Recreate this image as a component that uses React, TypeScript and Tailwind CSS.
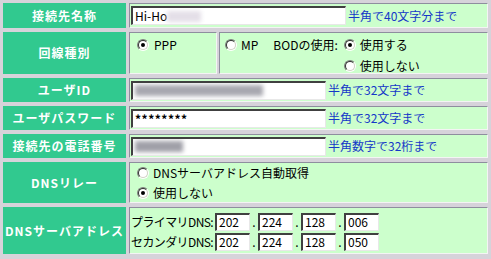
const font = "font-['Noto_Sans_CJK_JP','Noto_Sans',sans-serif]";

function Radio({ checked }: { checked?: boolean }) {
  return (
    <span className="inline-flex h-[12px] w-[12px] shrink-0 rounded-full border border-t-[#808080] border-l-[#808080] border-b-white border-r-white">
      <span className="flex h-full w-full items-center justify-center rounded-full border border-t-[#303030] border-l-[#303030] border-b-[#d4d0c8] border-r-[#d4d0c8] bg-white">
        {checked && <span className="h-[4px] w-[4px] rounded-full bg-black" />}
      </span>
    </span>
  );
}

function Field({ w, h = 'h-[19px]', children }: { w: string; h?: string; children?: React.ReactNode }) {
  return (
    <div
      className={`${w} ${h} flex shrink-0 items-center overflow-hidden border-t-2 border-l-2 border-b border-r border-t-[#404040] border-l-[#404040] border-b-[#e8e8e8] border-r-[#e8e8e8] bg-white pl-[2px] text-[12px] leading-none text-black`}
    >
      {children}
    </div>
  );
}

function Label({ text }: { text: string }) {
  return (
    <div className="flex items-center justify-center bg-[#31c98f] text-[12px] font-bold tracking-[1px] text-white">
      {text}
    </div>
  );
}

function Value({ children, className = '' }: { children: React.ReactNode; className?: string }) {
  return (
    <div
      className={`flex border border-t-[#8e8e9e] border-l-[#8e8e9e] border-b-[#f4f4f4] border-r-[#f4f4f4] bg-[#ccffcc] text-[12px] text-black ${className}`}
    >
      {children}
    </div>
  );
}

function Hint({ text }: { text: string }) {
  return <span className="ml-[2px] whitespace-nowrap text-[12px] text-[#1437c8]">{text}</span>;
}

function Blur({ w, c }: { w: string; c: string }) {
  return <span className={`inline-block h-[11px] ${w} ${c} blur-[2px]`} />;
}

// one line of four ip octets
function IpRow({ label, parts }: { label: string; parts: string[] }) {
  return (
    <div className="flex h-[18px] items-center">
      <span className="w-[84px] whitespace-nowrap tracking-[-0.6px] leading-[14px]">{label}</span>
      {parts.map((p, i) => (
        <div key={i} className="flex items-center">
          <Field w="w-[35px]" h="h-[18px]">
            {p}
          </Field>
          {i < parts.length - 1 && <span className="w-[8px] text-center leading-[14px]">.</span>}
        </div>
      ))}
    </div>
  );
}

export default function App() {
  return (
    <div className={`h-[259px] w-[491px] bg-[#d6d3da] p-[3px] ${font}`}>
      <div className="grid grid-cols-[123px_359px] grid-rows-[25px_42px_24px_24px_24px_41px_47px] gap-x-[3px] gap-y-[4px]">
        <Label text="接続先名称" />
        <Value className="items-center pl-[1px]">
          <Field w="w-[215px]">
            <span>Hi-Ho</span>
            <Blur w="w-[34px]" c="bg-[#e4dfe8]" />
          </Field>
          <Hint text="半角で40文字分まで" />
        </Value>

        <Label text="回線種別" />
        <div className="flex gap-[2px]">
          <Value className="w-[88px] items-start gap-[5px] pl-[7px] pt-[6px]">
            <Radio checked />
            <span className="leading-[12px]">PPP</span>
          </Value>
          <Value className="flex-1 items-start pl-[5px] pt-[5px]">
            <div className="flex items-center gap-[4px]">
              <Radio />
              <span className="leading-[14px]">MP</span>
            </div>
            <span className="ml-[15px] leading-[14px]">BODの使用:</span>
            <div className="ml-[6px] flex flex-col gap-[7px]">
              <div className="flex items-center gap-[4px]">
                <Radio checked />
                <span className="leading-[14px]">使用する</span>
              </div>
              <div className="flex items-center gap-[4px]">
                <Radio />
                <span className="leading-[14px]">使用しない</span>
              </div>
            </div>
          </Value>
        </div>

        <Label text="ユーザID" />
        <Value className="items-center pl-[1px]">
          <Field w="w-[195px]">
            <Blur w="w-[128px]" c="bg-[#a8a8b0]" />
          </Field>
          <Hint text="半角で32文字まで" />
        </Value>

        <Label text="ユーザパスワード" />
        <Value className="items-center pl-[1px]">
          <Field w="w-[195px]">
            <span className="font-bold tracking-[0.5px]">********</span>
          </Field>
          <Hint text="半角で32文字まで" />
        </Value>

        <Label text="接続先の電話番号" />
        <Value className="items-center pl-[1px]">
          <Field w="w-[195px]">
            <Blur w="w-[48px]" c="bg-[#a0a0a8]" />
          </Field>
          <Hint text="半角数字で32桁まで" />
        </Value>

        <Label text="DNSリレー" />
        <Value className="flex-col justify-center gap-[6px] pl-[7px]">
          <div className="flex items-center gap-[4px]">
            <Radio />
            <span className="leading-[14px]">DNSサーバアドレス自動取得</span>
          </div>
          <div className="flex items-center gap-[4px]">
            <Radio checked />
            <span className="leading-[14px]">使用しない</span>
          </div>
        </Value>

        <Label text="DNSサーバアドレス" />
        <Value className="flex-col justify-center gap-[2px] pl-[1px] pt-[2px]">
          <IpRow label="プライマリDNS:" parts={['202', '224', '128', '006']} />
          <IpRow label="セカンダリDNS:" parts={['202', '224', '128', '050']} />
        </Value>
      </div>
    </div>
  );
}
